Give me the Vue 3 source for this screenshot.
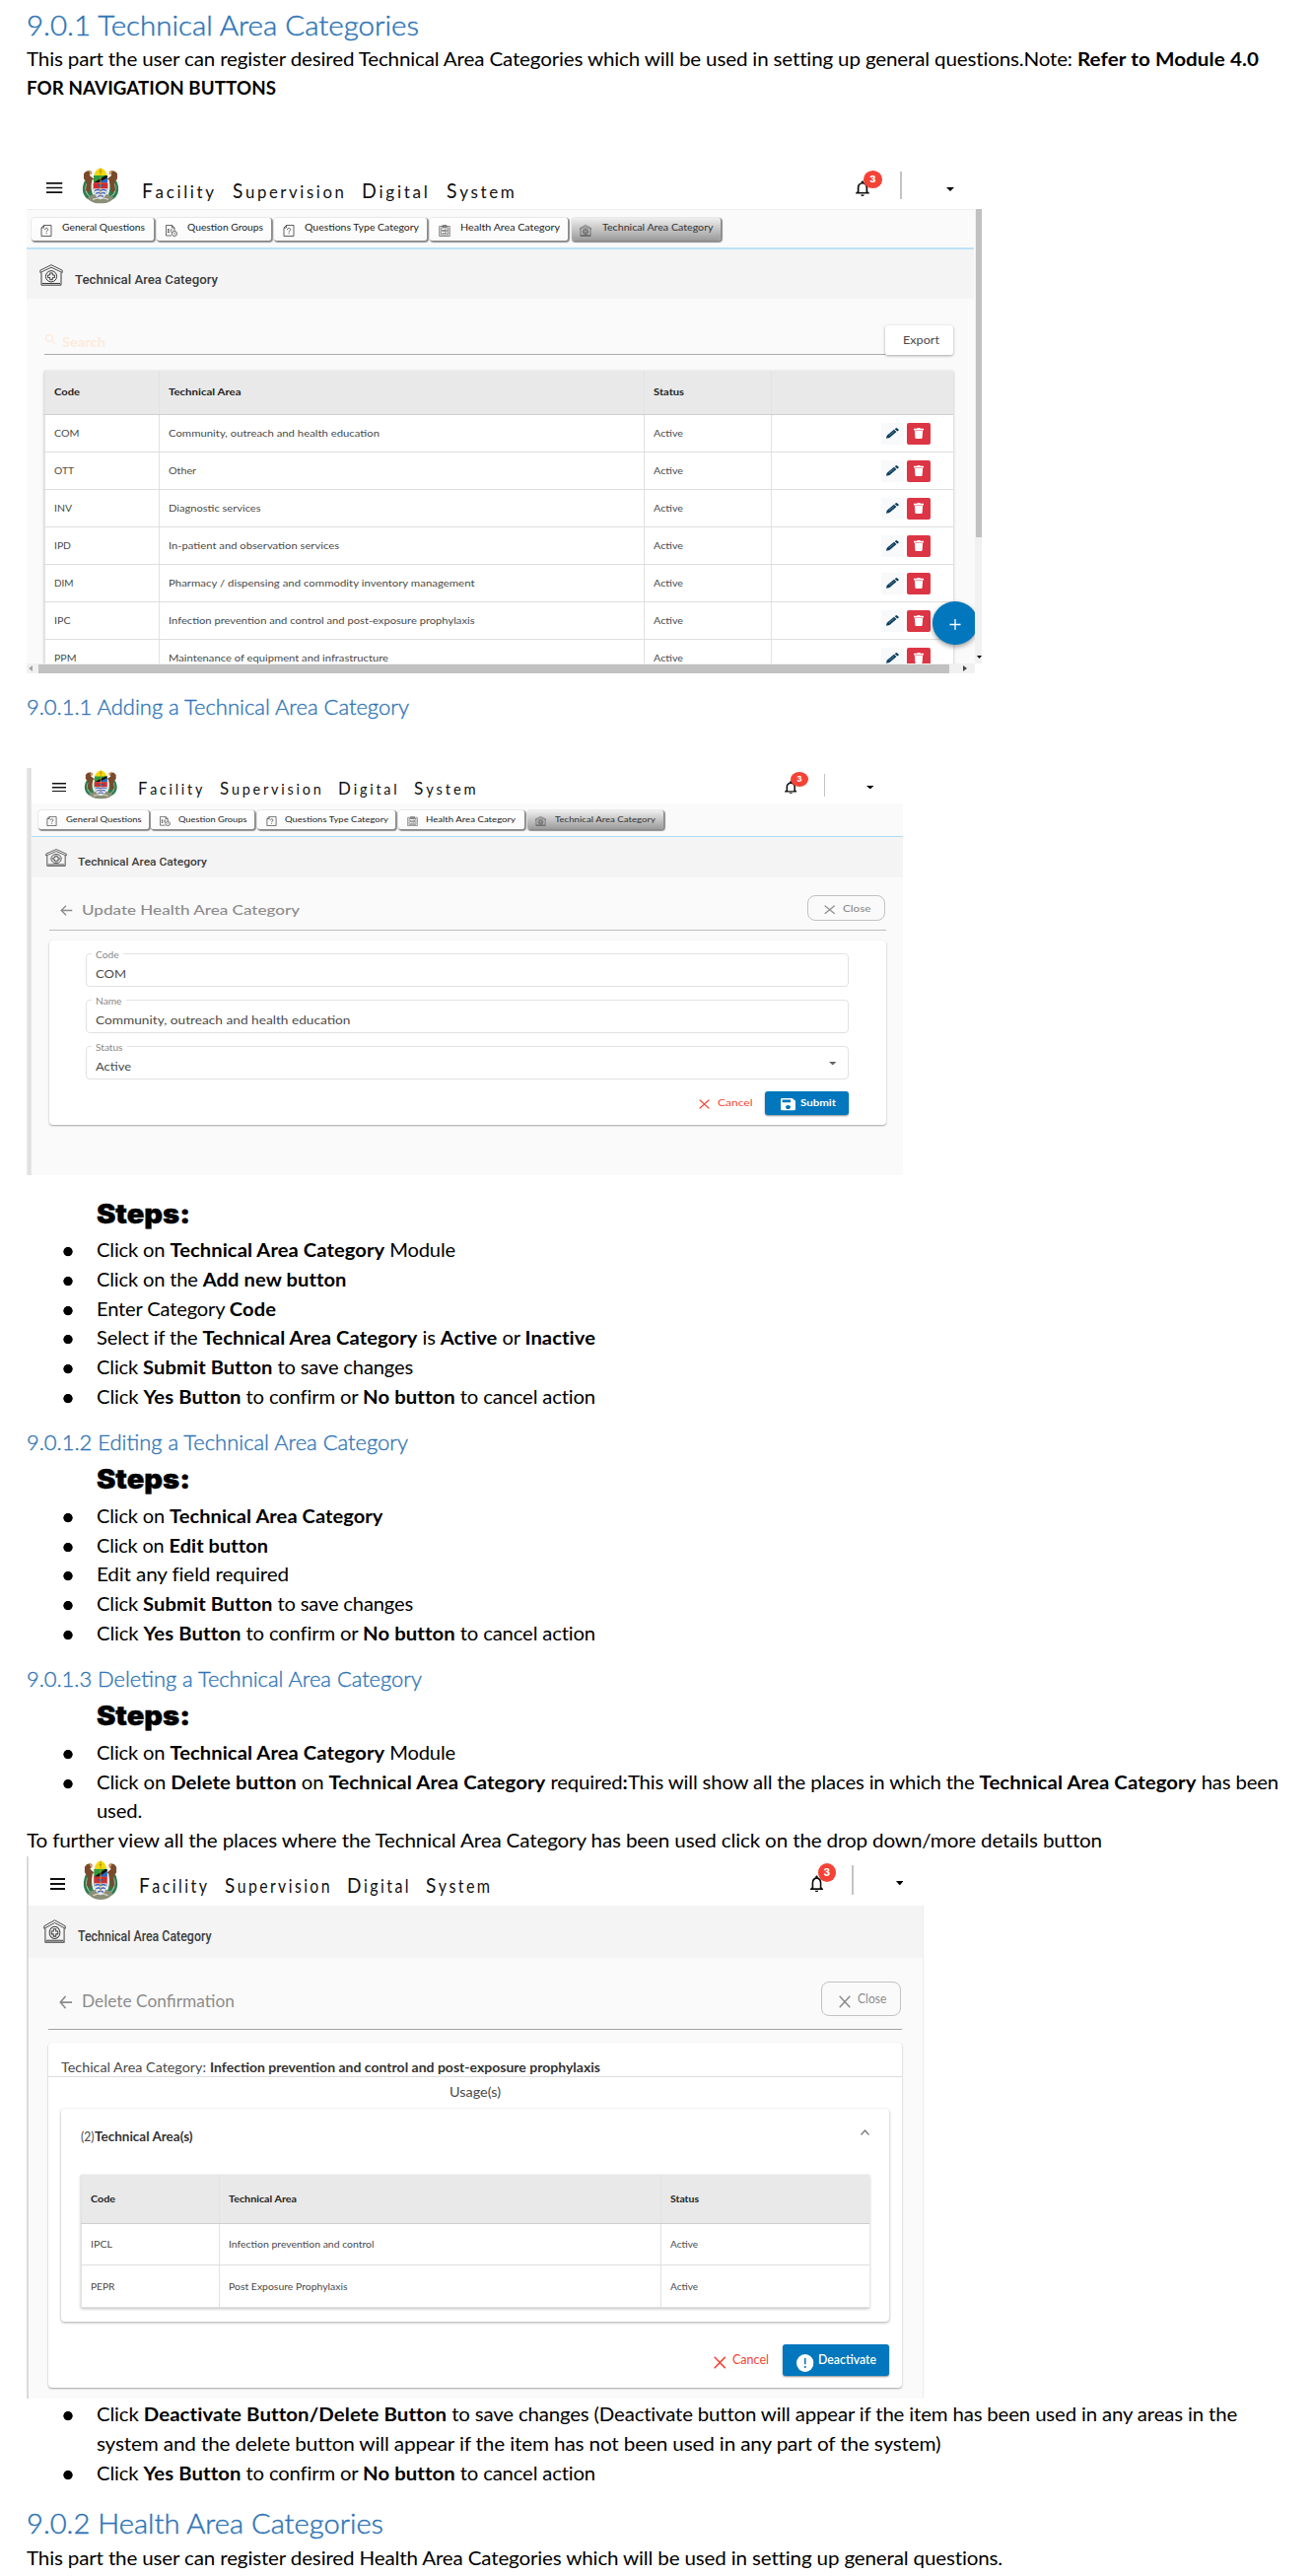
<script setup>
// Stretches a run of text horizontally so that it occupies the given width.
const vFit = {
  mounted(el, { value }) {
    const natural = el.getBoundingClientRect().width
    el.style.transform = `scaleX(${value / natural})`
    el.style.marginRight = `${value - natural}px`
  },
}

const wideTabs = [
  { label: 'General Questions', icon: 'i-doc', w: 123.5, t: 84 },
  { label: 'Question Groups', icon: 'i-group', w: 115.5, t: 77 },
  { label: 'Questions Type Category', icon: 'i-doc', w: 154.5, t: 116 },
  { label: 'Health Area Category', icon: 'i-clip', w: 140, t: 101 },
  { label: 'Technical Area Category', icon: 'i-house', w: 151.5, t: 112.5, on: true },
]
const slimTabs = [
  { label: 'General Questions', icon: 'i-doc', w: 112, t: 76.5 },
  { label: 'Question Groups', icon: 'i-group', w: 105, t: 69.5 },
  { label: 'Questions Type Category', icon: 'i-doc', w: 140, t: 105 },
  { label: 'Health Area Category', icon: 'i-clip', w: 127.5, t: 91 },
  { label: 'Technical Area Category', icon: 'i-house', w: 138, t: 102, on: true },
]
const areas = [
  { code: 'COM', cw: 25.5, name: 'Community, outreach and health education', nw: 214 },
  { code: 'OTT', cw: 20, name: 'Other', nw: 28 },
  { code: 'INV', cw: 18, name: 'Diagnostic services', nw: 93.5 },
  { code: 'IPD', cw: 17, name: 'In-patient and observation services', nw: 173 },
  { code: 'DIM', cw: 19.5, name: 'Pharmacy / dispensing and commodity inventory management', nw: 310.5 },
  { code: 'IPC', cw: 16.5, name: 'Infection prevention and control and post-exposure prophylaxis', nw: 310.5 },
  { code: 'PPM', cw: 22.5, name: 'Maintenance of equipment and infrastructure', nw: 223 },
]
const usages = [
  { code: 'IPCL', cw: 22, name: 'Infection prevention and control', nw: 147.5 },
  { code: 'PEPR', cw: 24.5, name: 'Post Exposure Prophylaxis', nw: 120.5 },
]
const fields = [
  { label: 'Code', lw: 23.5, value: 'COM', vw: 31 },
  { label: 'Name', lw: 26.5, value: 'Community, outreach and health education', vw: 258.5 },
  { label: 'Status', lw: 27.5, value: 'Active', vw: 36, menu: true },
]
</script>

<template>
  <svg class="defs" width="0" height="0" aria-hidden="true">
    <symbol id="emblem" viewBox="0 0 38 36" preserveAspectRatio="none">
      <path d="M3 13C-.5 20 0 28 7 32l7 0-2-18zM35 13c3.500 7 3 15-4 19l-7 0 2-18z" fill="#2f7d4f" />
      <path d="M5 16c-2 5-1 10 3 13M33 16c2 5 1 10-3 13" fill="none" stroke="#cfe3d4" stroke-width=".9" />
      <path d="M2 6q3-4 5.500-2.500Q9 6 8 8l5 4v5l-4 1-1 8-4-3 1-8-3-4z" fill="#7a4a2c" />
      <path d="M36 6q-3-4-5.500-2.500Q29 6 30 8l-5 4v5l4 1 1 8 4-3-1-8 3-4z" fill="#7a4a2c" />
      <path d="M7 3l2.500 1.500L9 7M31 3l-2.500 1.500L29 7" stroke="#c98a4b" stroke-width="1.500" fill="none" />
      <path d="M11.500 12c-2 7-1 13 2.500 18M26.500 12c2 7 1 13-2.500 18" stroke="#f1f1ec" stroke-width="2" fill="none" />
      <path d="M6 30c5-5 21-5 26 0-3 8-23 8-26 0z" fill="#8b8f78" />
      <path d="M11 32q8-3 16 0" stroke="#d7d9c4" stroke-width="1.200" fill="none" />
      <path d="M12 6l7-6 7 6v15c0 6-3 9-7 11-4-2-7-5-7-11z" fill="#e9e6ee" />
      <path d="M12.500 9q.500-7.500 6.500-8.500Q25 1.500 25.500 9z" fill="#f2d90f" />
      <path d="M19 1v6M17.500 4h3" stroke="#b8860b" stroke-width=".8" />
      <path d="M12 8h14v7H12z" fill="#2e9a3d" />
      <path d="M16 15l10-7v7z" fill="#2768c8" />
      <path d="M12 15l12-7h2v2l-9 5z" fill="#111" />
      <path d="M12 15h14v6H12z" fill="#d42a2e" />
      <path d="M16 17h6l-3 4z" fill="#2a57a8" />
      <path d="M13 23l3-1 3 1 3-1 3 1M14 26l3-1 2 1 3-1 2 1M16 29l3-1 3 1" stroke="#3c66c4" stroke-width="1.300" fill="none" />
      <path d="M19 9v20" stroke="#c9a427" stroke-width=".8" />
    </symbol>
    <symbol id="i-burger" viewBox="0 0 18 12" preserveAspectRatio="none">
      <path d="M0 1h18M0 6h18M0 11h18" stroke="#111" stroke-width="1.900" />
    </symbol>
    <symbol id="i-bell" viewBox="4 2 16 20" preserveAspectRatio="none">
      <path d="M12 22c1.100 0 2-.9 2-2h-4c0 1.100.9 2 2 2zm6-6v-5c0-3.070-1.630-5.640-4.500-6.320V4c0-.83-.67-1.500-1.500-1.500s-1.500.67-1.500 1.500v.68C7.640 5.360 6 7.920 6 11v5l-2 2v1h16v-1l-2-2zm-2 1H8v-6c0-2.480 1.510-4.500 4-4.500s4 2.020 4 4.500v6z" fill="#111" />
    </symbol>
    <symbol id="i-caret" viewBox="0 0 10 5" preserveAspectRatio="none"><path d="M0 0h10L5 5z" fill="currentColor" /></symbol>
    <symbol id="i-house" viewBox="0 0 24 22" preserveAspectRatio="none">
      <g fill="none" stroke="currentColor">
        <path d="M.8 8.500V6.200L12 .7l11.200 5.500v2.300L12 3.200z" stroke-width=".9" />
        <path d="M2 8.500v12.700h20V8.500M3 19.500h18" stroke-width="1" />
        <circle cx="12" cy="12.300" r="5.600" stroke-width="1" />
        <path d="M10.700 8.900h2.600v2.100h2.100v2.600h-2.100v2.100h-2.600v-2.100H8.600V11h2.100z" stroke-width="1" />
      </g>
    </symbol>
    <symbol id="i-doc" viewBox="0 0 12 12" preserveAspectRatio="none">
      <path d="M1 3v8.500h10V.5H3.500zM3.500.5V3H1M4.500 5c0-2.200 3.200-2.200 3.200-.2 0 1.200-1.600 1-1.600 2.500M6.100 8.200v1.100" fill="none" stroke="#444" stroke-width=".85" />
    </symbol>
    <symbol id="i-group" viewBox="0 0 12 12" preserveAspectRatio="none">
      <path d="M6 11H.5V.5h6L9 3v3M6.500.5V3H9M4.500 5h2.500M4.500 7h2" fill="none" stroke="#444" stroke-width=".8" />
      <path d="M2 4.300h1.500v1.500H2zM2 6.500h1.500V8H2z" fill="#333" />
      <circle cx="9" cy="9" r="2.500" fill="none" stroke="#444" stroke-width=".8" /><path d="M9 8v1.200h1" stroke="#444" stroke-width=".6" fill="none" />
    </symbol>
    <symbol id="i-clip" viewBox="0 0 12 12" preserveAspectRatio="none">
      <path d="M.7 1.500h10.600v10H.7zM2.300 3h7.400v7H2.300zM4 .5h4v1.800H4zM3.800 7V5l1.500 2V5M6.500 5h1.700v2H6.500zM3.500 8.600h5" fill="none" stroke="#555" stroke-width=".7" />
    </symbol>
    <symbol id="i-search" viewBox="3 3 17.500 17.500">
      <path d="M15.500 14h-.79l-.28-.27A6.470 6.470 0 0 0 16 9.500 6.500 6.500 0 1 0 9.500 16c1.610 0 3.090-.59 4.230-1.570l.27.28v.79l5 4.990L20.490 19l-4.990-5zm-6 0C7.010 14 5 11.990 5 9.500S7.010 5 9.500 5 14 7.010 14 9.500 11.990 14 9.500 14z" fill="currentColor" />
    </symbol>
    <symbol id="i-pencil" viewBox="0 0 14 12" preserveAspectRatio="none">
      <path d="M0 11.800l.8-3.400L8.500 2l2.800 2.300-7.600 6.500zM9.300 1.300L10.700.2q.5-.3 1 0l2 1.600q.4.500 0 1l-1.500 1.100z" fill="#0b3c5d" />
      <path d="M3 8.600l5.500-4.500" stroke="#8fb3cc" stroke-width=".6" />
    </symbol>
    <symbol id="i-trash" viewBox="0 0 10 11" preserveAspectRatio="none">
      <path d="M0 .8h3.200L3.800 0h2.400l.6.8H10v1.600H0zM.9 3h8.200l-.5 7q-.1 1-1 1H2.400q-.9 0-1-1z" fill="#fff" />
    </symbol>
    <symbol id="i-back" viewBox="0 0 14 12" preserveAspectRatio="none">
      <path d="M14 6H1.500M6.800.8L1.300 6l5.500 5.200" fill="none" stroke="#8c8c8c" stroke-width="1.500" />
    </symbol>
    <symbol id="i-x" viewBox="0 0 12 12" preserveAspectRatio="none">
      <path d="M.7.700l10.600 10.600M11.300.7L.7 11.300" stroke="currentColor" stroke-width="1.500" />
    </symbol>
    <symbol id="i-save" viewBox="3 3 18 18" preserveAspectRatio="none">
      <path d="M17 3H5a2 2 0 0 0-2 2v14c0 1.100.9 2 2 2h14c1.100 0 2-.9 2-2V7l-4-4zm-5 16c-1.660 0-3-1.340-3-3s1.340-3 3-3 3 1.340 3 3-1.340 3-3 3zm3-10H5V5h10v4z" fill="#fff" />
    </symbol>
    <symbol id="i-alert" viewBox="0 0 18 18" preserveAspectRatio="none">
      <circle cx="9" cy="9" r="9" fill="#fff" /><path d="M9 4v6.200M9 12v2" stroke="#0277bd" stroke-width="1.600" />
    </symbol>
    <symbol id="i-up" viewBox="0 0 10 6" preserveAspectRatio="none"><path d="M.6 5.400L5 1l4.400 4.400" fill="none" stroke="#777" stroke-width="1.400" /></symbol>
  </svg>

  <article class="doc">
    <h3><span v-fit="398">9.0.1 Technical Area Categories</span></h3>
    <div class="text intro">
      <p v-fit="1250">This part the user can register desired Technical Area Categories which will be used in setting up general questions.Note: <b>Refer to Module 4.0</b></p>
      <p v-fit="253"><b>FOR NAVIGATION BUTTONS</b></p>
    </div>

    <!-- Technical area list -->
    <section class="shot list">
      <header class="bar">
        <svg class="burger"><use href="#i-burger" /></svg>
        <svg class="logo"><use href="#emblem" /></svg>
        <div class="brand">
          <span v-fit="75.7"><i>F</i>acility</span><span v-fit="115.5"><i>S</i>upervision</span><span v-fit="69.5"><i>D</i>igital</span><span v-fit="71.5"><i>S</i>ystem</span>
        </div>
        <div class="bell"><svg><use href="#i-bell" /></svg><b class="badge">3</b></div>
        <hr class="sep" />
        <svg class="caret"><use href="#i-caret" /></svg>
      </header>
      <div class="pane">
        <nav class="tabs">
          <div v-for="t in wideTabs" :key="t.label" class="tab" :class="{ on: t.on }" :style="{ width: t.w + 'px' }">
            <svg><use :href="'#' + t.icon" /></svg><span v-fit="t.t">{{ t.label }}</span>
          </div>
        </nav>
        <div class="band"><svg><use href="#i-house" /></svg><span v-fit="145">Technical Area Category</span></div>
        <div class="search">
          <div class="query"><svg><use href="#i-search" /></svg><span v-fit="44">Search</span></div>
          <div class="export"><span v-fit="37">Export</span></div>
        </div>
        <div class="table">
          <div class="row head"><div><span v-fit="26">Code</span></div><div><span v-fit="73.5">Technical Area</span></div><div><span v-fit="31">Status</span></div><div></div></div>
          <div v-for="a in areas" :key="a.code" class="row">
            <div><span v-fit="a.cw">{{ a.code }}</span></div>
            <div><span v-fit="a.nw">{{ a.name }}</span></div>
            <div><span v-fit="30">Active</span></div>
            <div class="acts"><em class="edit"><svg><use href="#i-pencil" /></svg></em><em class="del"><svg><use href="#i-trash" /></svg></em></div>
          </div>
        </div>
        <div class="fab"><svg viewBox="0 0 14 14"><path d="M7 0v14M0 7h14" stroke="#fff" stroke-width="1.700" /></svg></div>
      </div>
      <div class="vbar"><div></div><svg class="caret"><use href="#i-caret" /></svg></div>
      <div class="hbar"><svg viewBox="0 0 4 6"><path d="M4 0v6L0 3z" fill="#a3a3a3" /></svg><div></div><svg viewBox="0 0 4 6"><path d="M0 0v6l4-3z" fill="#444" /></svg></div>
    </section>

    <h4 class="first"><span v-fit="388">9.0.1.1 Adding a Technical Area Category</span></h4>

    <!-- Update form -->
    <section class="shot form">
      <header class="bar">
        <svg class="burger"><use href="#i-burger" /></svg>
        <svg class="logo"><use href="#emblem" /></svg>
        <div class="brand">
          <span v-fit="68"><i>F</i>acility</span><span v-fit="105.5"><i>S</i>upervision</span><span v-fit="62.5"><i>D</i>igital</span><span v-fit="65.5"><i>S</i>ystem</span>
        </div>
        <div class="bell"><svg><use href="#i-bell" /></svg><b class="badge">3</b></div>
        <hr class="sep" />
        <svg class="caret"><use href="#i-caret" /></svg>
      </header>
      <nav class="tabs">
        <div v-for="t in slimTabs" :key="t.label" class="tab" :class="{ on: t.on }" :style="{ width: t.w + 'px' }">
          <svg><use :href="'#' + t.icon" /></svg><span v-fit="t.t">{{ t.label }}</span>
        </div>
      </nav>
      <div class="band"><svg><use href="#i-house" /></svg><span v-fit="131">Technical Area Category</span></div>
      <div class="title">
        <svg><use href="#i-back" /></svg><span v-fit="221">Update Health Area Category</span>
        <div class="close"><svg><use href="#i-x" /></svg><span v-fit="28.5">Close</span></div>
      </div>
      <div class="card">
        <div v-for="f in fields" :key="f.label" class="field">
          <label><span v-fit="f.lw">{{ f.label }}</span></label>
          <div class="value"><span v-fit="f.vw">{{ f.value }}</span><svg v-if="f.menu" class="caret"><use href="#i-caret" /></svg></div>
        </div>
        <div class="foot">
          <div class="cancel"><svg><use href="#i-x" /></svg><span v-fit="35.5">Cancel</span></div>
          <div class="primary"><svg><use href="#i-save" /></svg><span v-fit="36">Submit</span></div>
        </div>
      </div>
    </section>

    <h2 class="first"><span v-fit="95">Steps:</span></h2>
    <ul class="text">
      <li><p v-fit="364">Click on <b>Technical Area Category</b> Module</p></li>
      <li><p v-fit="253.500">Click on the <b>Add new button</b></p></li>
      <li><p v-fit="182">Enter Category <b>Code</b></p></li>
      <li><p v-fit="506">Select if the <b>Technical Area Category</b> is <b>Active</b> or <b>Inactive</b></p></li>
      <li><p v-fit="321">Click <b>Submit Button</b> to save changes</p></li>
      <li><p v-fit="506">Click <b>Yes Button</b> to confirm or <b>No button</b> to cancel action</p></li>
    </ul>

    <h4><span v-fit="387">9.0.1.2 Editing a Technical Area Category</span></h4>
    <h2><span v-fit="95">Steps:</span></h2>
    <ul class="text">
      <li><p v-fit="290.500">Click on <b>Technical Area Category</b></p></li>
      <li><p v-fit="174">Click on <b>Edit button</b></p></li>
      <li><p v-fit="195">Edit any field required</p></li>
      <li><p v-fit="321">Click <b>Submit Button</b> to save changes</p></li>
      <li><p v-fit="506">Click <b>Yes Button</b> to confirm or <b>No button</b> to cancel action</p></li>
    </ul>

    <h4><span v-fit="401">9.0.1.3 Deleting a Technical Area Category</span></h4>
    <h2><span v-fit="95">Steps:</span></h2>
    <ul class="text">
      <li><p v-fit="364">Click on <b>Technical Area Category</b> Module</p></li>
      <li>
        <p v-fit="1199">Click on <b>Delete button</b> on <b>Technical Area Category</b> required<b>:</b>This will show all the places in which the <b>Technical Area Category</b> has been</p>
        <p v-fit="46">used.</p>
      </li>
    </ul>
    <div class="text"><p v-fit="1091">To further view all the places where the Technical Area Category has been used click on the drop down/more details button</p></div>

    <!-- Delete confirmation -->
    <section class="shot confirm">
      <header class="bar">
        <svg class="burger"><use href="#i-burger" /></svg>
        <svg class="logo"><use href="#emblem" /></svg>
        <div class="brand">
          <span v-fit="71.5"><i>F</i>acility</span><span v-fit="109"><i>S</i>upervision</span><span v-fit="65"><i>D</i>igital</span><span v-fit="67.5"><i>S</i>ystem</span>
        </div>
        <div class="bell"><svg><use href="#i-bell" /></svg><b class="badge">3</b></div>
        <hr class="sep" />
        <svg class="caret"><use href="#i-caret" /></svg>
      </header>
      <div class="band"><svg><use href="#i-house" /></svg><span v-fit="135.5">Technical Area Category</span></div>
      <div class="title">
        <svg><use href="#i-back" /></svg><span v-fit="155">Delete Confirmation</span>
        <div class="close"><svg><use href="#i-x" /></svg><span v-fit="29.5">Close</span></div>
      </div>
      <div class="card">
        <div class="subject"><span v-fit="147">Techical Area Category:</span><b v-fit="396">Infection prevention and control and post-exposure prophylaxis</b></div>
        <div class="usage"><span v-fit="52">Usage(s)</span></div>
        <div class="panel">
          <div class="phead"><span v-fit="13.500">(2)</span><b v-fit="99.500">Technical Area(s)</b><svg><use href="#i-up" /></svg></div>
          <div class="table">
            <div class="row head"><div><span v-fit="25">Code</span></div><div><span v-fit="69">Technical Area</span></div><div><span v-fit="29">Status</span></div></div>
            <div v-for="u in usages" :key="u.code" class="row">
              <div><span v-fit="u.cw">{{ u.code }}</span></div>
              <div><span v-fit="u.nw">{{ u.name }}</span></div>
              <div><span v-fit="28">Active</span></div>
            </div>
          </div>
        </div>
        <div class="foot">
          <div class="cancel"><svg><use href="#i-x" /></svg><span v-fit="37">Cancel</span></div>
          <div class="primary"><svg><use href="#i-alert" /></svg><span v-fit="59">Deactivate</span></div>
        </div>
      </div>
    </section>

    <ul class="text last">
      <li>
        <p v-fit="1157">Click <b>Deactivate Button/Delete Button</b> to save changes (Deactivate button will appear if the item has been used in any areas in the</p>
        <p v-fit="856.500">system and the delete button will appear if the item has not been used in any part of the system)</p>
      </li>
      <li><p v-fit="506">Click <b>Yes Button</b> to confirm or <b>No button</b> to cancel action</p></li>
    </ul>
    <h3 class="second"><span v-fit="362">9.0.2 Health Area Categories</span></h3>
    <div class="text"><p v-fit="990">This part the user can register desired Health Area Categories which will be used in setting up general questions.</p></div>
  </article>
</template>

<style>
body { margin: 0; background: #fff; }
</style>

<style scoped>
.defs { display: block; }
.doc {
  width: 1332px; height: 2613px; box-sizing: border-box; padding-left: 27px; overflow: hidden;
  font-family: Lato, "Liberation Sans", sans-serif; color: #000;
}
h2, h3, h4, p, ul { margin: 0; padding: 0; }
.doc span, .doc p, .subject b, .phead b {
  display: block; width: max-content; white-space: nowrap; transform-origin: 0 50%; flex: none;
}
.text { font-size: 18.5px; line-height: 29.8px; letter-spacing: -.15px; translate: 0 .9px; }
.text b { letter-spacing: .08px; }
h3 { height: 37.7px; padding-top: 7px; font-weight: 300; font-size: 26.5px; line-height: 38.7px; color: #2e74b5; -webkit-text-stroke: .4px #2e74b5; }
h3.second { height: 37.7px; padding-top: 17px; margin-bottom: 1px; }
h4 { height: 28px; padding-top: 17px; font-weight: 300; font-size: 21.5px; line-height: 28px; margin-top: 0; color: #2e74b5; -webkit-text-stroke: .35px #2e74b5; }
h4.first { padding-top: 19.500px; margin-bottom: 47.500px; }
h2 { height: 40.5px; padding-top: 5.5px; margin-left: 71px; font-family: Inter, "Liberation Sans", sans-serif; font-weight: 900; font-size: 26.8px; line-height: 37px; -webkit-text-stroke: .4px #000; }
h2.first { padding-top: 21px; height: 40px; }
.intro { height: 115.3px; }
ul { list-style: none; }
li { padding-left: 71px; background: radial-gradient(circle 4.800px at 42px 15.700px, #000 4.300px, transparent 5px) no-repeat; }
ul.last { padding-top: 1.700px; }

.shot { position: relative; overflow: hidden; color: #4a4a4a; }
.bar { display: flex; align-items: flex-start; background: #fff; }
.bar svg, .bar div, .bar hr { flex: none; }
.brand { display: flex; color: #111; letter-spacing: 2.800px; line-height: 24px; }
.brand i { font-style: normal; }
.bell { position: relative; }
.bell svg { display: block; width: 100%; height: 100%; }
.badge { position: absolute; border-radius: 50%; background: #f44336; color: #fff; text-align: center; font-family: Inter, sans-serif; font-weight: 800; }
.sep { border: 0; margin: 0; width: 2px; background: #c4c4c4; }
.caret { color: #000; }
.tabs { display: flex; background: #fafafa; box-sizing: border-box; }
.tab {
  display: flex; box-sizing: border-box; flex: none; border-radius: 3px; background: linear-gradient(#fff, #fafafa);
  box-shadow: 1px 1px 1px 1px #8c8c8c, 0 0 1px #bbb; color: #222;
}
.tab svg { flex: none; }
.tab.on { background: linear-gradient(#efefef, #9b9b9b); color: #333; }
.band { display: flex; box-sizing: border-box; background: #f4f4f4; font-family: Roboto, sans-serif; font-weight: 500; color: #3c3c3c; }
.row { display: grid; box-sizing: border-box; border-bottom: 1px solid #dedede; background: #fff; }
.row > div { border-left: 1px solid #e0e2e4; display: flex; align-items: center; padding-left: 9px; }
.row.head { background: #e9e9e9; font-weight: 700; color: #222; border-bottom-color: #cfcfcf; }
.table { box-shadow: 0 1px 3px rgba(0, 0, 0, .25); }
.title { display: flex; box-sizing: border-box; color: #8c8c8c; }
.close { display: flex; box-sizing: border-box; margin-left: auto; border: 1.500px solid #c2c2c2; border-radius: 8px; color: #8c8c8c; }
.card { box-sizing: border-box; background: #fff; border-radius: 4px; box-shadow: 0 1px 2px rgba(0, 0, 0, .35); }
.foot { display: flex; justify-content: flex-end; }
.cancel { display: flex; color: #f44336; }
.primary { display: flex; box-sizing: border-box; border-radius: 3px; background: #0277bd; color: #fff; font-weight: 700; box-shadow: 0 1px 2px rgba(0, 0, 0, .45); }

.list { width: 969px; height: 524px; display: grid; grid-template: 52px 461px 10px / 961.500px 7.500px; }
.list .bar { grid-column: 1 / 3; }
.list .burger { width: 16.500px; height: 11px; margin: 25.500px 0 0 20px; }
.list .logo { width: 38px; height: 36.500px; margin: 10.500px 0 0 19.500px; }
.list .brand { margin: 21px 0 0 23px; gap: 16px; font-size: 18px; }
.list .brand i { font-size: 20.500px; }
.list .bell { width: 14px; height: 16px; margin: 23.500px 0 0 auto; }
.list .badge { left: 7.500px; top: -10.500px; width: 19.500px; height: 18px; font-size: 9.500px; line-height: 18px; }
.list .sep { height: 28px; margin: 14.500px 0 0 31px; width: 1.500px; }
.list .caret { width: 8px; height: 4px; margin: 29.700px 28px 0 45.500px; }
.list .pane { position: relative; overflow: hidden; background: #fafafa; }
.list .tabs { height: 41px; padding: 8.500px 0 0 5px; gap: 3.600px; border-top: 1px solid #eee; border-bottom: 2px solid #bfe2f9; width: 961px; }
.list .tab { height: 23px; padding-left: 8.500px; font-size: 9.500px; line-height: 20px; }
.list .tab svg { width: 12px; height: 12px; margin: 6.500px 10.500px 0 0; }
.list .band { height: 50px; padding: 15px 0 0 12.500px; width: 961px; font-size: 12.300px; line-height: 33px; }
.list .band svg { width: 24px; height: 22px; margin-right: 12.500px; }
.list .search { display: flex; padding: 27px 0 0 18px; height: 30px; width: 922px; }
.list .query { display: flex; width: 853px; box-sizing: border-box; border-bottom: 1.500px solid #aaa; color: #fdebdc; font-size: 14px; line-height: 34px; font-weight: 700; }
.list .query svg { width: 11px; height: 11px; margin: 9.500px 6px 0 1px; }
.list .export { width: 69px; height: 30px; background: #fff; border-radius: 3px; box-sizing: border-box; padding-left: 17.500px; font-size: 12px; line-height: 29.500px; box-shadow: 0 1px 3px rgba(0, 0, 0, .35); }
.list .table { width: 922px; margin: 16px 0 0 18px; font-size: 9.600px; }
.list .row { height: 38.050px; grid-template-columns: 116px 492px 129px 185px; }
.list .row.head { height: 45px; }
.list .row .acts { padding: 0 23px 0 0; justify-content: flex-end; gap: 3px; }
.edit, .del { display: flex; align-items: center; justify-content: center; }
.edit { width: 23px; height: 22px; background: #f8f9fa; }
.edit svg { width: 13px; height: 11px; margin-top: -1px; }
.del { width: 24.500px; height: 22px; background: #dc3545; border-radius: 2px; }
.del svg { width: 10px; height: 11px; }
.fab { position: absolute; left: 919px; top: 398px; width: 46px; height: 44px; border-radius: 50%; background: #0277bd; box-shadow: 0 2px 5px rgba(0, 0, 0, .4); display: flex; align-items: center; justify-content: center; }
.fab svg { width: 14px; height: 11px; margin-top: 4px; }
.vbar { background: #f1f1f1; display: flex; flex-direction: column; justify-content: space-between; }
.vbar div { height: 333px; margin-left: 1.500px; background: #c1c1c1; }
.list .vbar .caret { width: 5px; height: 3px; margin: 0 0 5px 2.500px; }
.hbar { display: flex; align-items: center; background: #f1f1f1; height: 10px; padding: 0 8px 0 2px; grid-column: 1; }
.hbar div { flex: 1; height: 8.500px; margin: 1.500px 14px 0 6px; background: #c1c1c1; }
.hbar svg { width: 4px; height: 6px; }

.form { width: 889px; height: 413px; background: #fafafa; border-left: 0; box-sizing: border-box; padding-left: 5px; }
.form::before { content: ""; position: absolute; left: 0; top: 0; width: 5px; height: 100%; background: linear-gradient(90deg, #eaeaea, #dcdcdc 80%, #f4f4f4); }
.form .bar { height: 36px; }
.form .burger { width: 14.500px; height: 9.500px; margin: 15px 0 0 20.500px; }
.form .logo { width: 34.500px; height: 29.500px; margin: 2.500px 0 0 18px; }
.form .brand { margin: 9.200px 0 0 20.500px; gap: 14.500px; font-size: 14.500px; }
.form .brand i { font-size: 17px; }
.form .bell { width: 12.500px; height: 13.500px; margin: 13px 0 0 auto; }
.form .badge { left: 6.500px; top: -9px; width: 18px; height: 15px; font-size: 8px; line-height: 15px; }
.form .sep { height: 23px; margin: 6px 0 0 27.500px; width: 1.500px; }
.form .caret { width: 7.500px; height: 3.500px; margin: 18px 29.500px 0 42px; }
.form .tabs { height: 34.500px; padding: 7px 0 0 6.500px; gap: 2.900px; border-bottom: 1.500px solid #aedcf8; }
.form .tab { height: 19.500px; padding-left: 8.500px; font-size: 8px; line-height: 18px; }
.form .tab svg { width: 11px; height: 10px; margin: 6px 8.500px 0 0; }
.form .band { height: 40.500px; padding: 11.500px 0 0 13.500px; font-size: 10.500px; line-height: 27px; }
.form .band svg { width: 22px; height: 18px; margin-right: 11.500px; }
.form .title { height: 54.500px; width: 849px; margin-left: 18px; padding-top: 18px; border-bottom: 1.500px solid #bdbdbd; font-size: 13.500px; line-height: 30px; font-weight: 500; }
.form .title > svg { width: 12.500px; height: 11px; margin: 10.500px 9.500px 0 11px; }
.form .close { width: 79px; height: 26.500px; margin-right: 1px; padding-left: 16px; font-size: 10px; line-height: 25.500px; }
.form .close svg { width: 11.500px; height: 9.500px; margin: 9.500px 7px 0 0; }
.form .card { width: 849px; height: 187px; margin: 9.500px 0 0 18px; padding: 13.500px 38px 0 37px; }
.field { height: 33.500px; box-sizing: border-box; border: 1px solid #e2e2e2; border-radius: 4px; margin-bottom: 13.500px; font-size: 11.500px; }
.field label { display: block; width: max-content; background: #fff; margin: -5.500px 0 0 5px; padding: 0 4px; font-size: 8.500px; line-height: 12px; color: #888; }
.field .value { display: flex; justify-content: space-between; padding-left: 9px; line-height: 25px; color: #4a4a4a; }
.form .value .caret { margin: 8.500px 12px 0 0; color: #666; }
.form .foot { padding-top: 0; margin-top: -1.500px; font-size: 9.500px; line-height: 23px; }
.form .cancel svg { width: 11px; height: 10px; margin: 8.500px 8px 0 0; }
.form .primary { width: 85px; height: 24px; margin-left: 12.500px; padding-left: 15.500px; }
.form .primary svg { width: 15px; height: 12.500px; margin: 7.500px 5.500px 0 0; }

.confirm { width: 909.5px; height: 550px; margin-top: .8px; background: #fafafa; box-sizing: border-box; padding-left: 2px; }
.confirm::before { content: ""; position: absolute; left: 0; top: 0; width: 2px; height: 100%; background: #dadada; }
.confirm::after { content: ""; position: absolute; right: 0; top: 50px; width: 1px; bottom: 0; background: #ececec; }
.confirm .bar { height: 50px; }
.confirm .burger { width: 15px; height: 12px; margin: 22px 0 0 22px; }
.confirm .logo { width: 36px; height: 40px; margin: 4px 0 0 18px; }
.confirm .brand { margin: 17.300px 0 0 21px; gap: 15px; font-size: 18.500px; }
.confirm .brand i { font-size: 22px; }
.confirm .bell { width: 13px; height: 17.500px; margin: 19px 0 0 auto; }
.confirm .badge { left: 7.500px; top: -12px; width: 18.500px; height: 19px; font-size: 10px; line-height: 19px; }
.confirm .sep { height: 30px; margin: 9px 0 0 29px; }
.confirm .caret { width: 7.500px; height: 4.500px; margin: 25px 20.500px 0 42.500px; }
.confirm .band { height: 53px; padding: 14px 0 0 15px; font-size: 13.800px; line-height: 35px; }
.confirm .band svg { width: 23px; height: 24px; margin-right: 12px; }
.confirm .title { height: 73.500px; width: 866px; margin-left: 20px; padding-top: 24px; border-bottom: 1.500px solid #a2a2a2; font-size: 17px; line-height: 39px; }
.confirm .title > svg { width: 13.500px; height: 14px; margin: 14.500px 10px 0 10.500px; }
.confirm .close { width: 81.500px; height: 35px; margin-right: 1px; padding-left: 17px; font-size: 12.500px; line-height: 34px; }
.confirm .close svg { width: 12px; height: 13px; margin: 13px 7.500px 0 0; }
.confirm .card { width: 866px; height: 350px; margin: 12.500px 0 0 20px; }
.subject { display: flex; height: 35.500px; box-sizing: border-box; border-bottom: 1px solid #ddd; padding: 15px 0 0 13px; gap: 4px; font-size: 13.500px; line-height: 21px; }
.subject b { color: #333; }
.usage { height: 31.500px; padding-left: 407px; font-size: 13.500px; line-height: 31px; }
.panel { width: 840px; height: 216px; box-sizing: border-box; margin-left: 13px; padding: 0 20px; border-radius: 4px; box-shadow: 0 1px 3px rgba(0, 0, 0, .35); }
.phead { display: flex; height: 67px; font-size: 12.500px; line-height: 58px; }
.phead b { color: #333; margin-left: .5px; }
.phead svg { width: 9px; height: 6px; margin: 21px 0 0 auto; }
.confirm .table { width: 800px; font-size: 9.800px; }
.confirm .row { height: 42.500px; grid-template-columns: 140px 448px 212px; }
.confirm .row.head { height: 50px; }
.confirm .foot { padding: 23px 13px 0 0; font-size: 12.500px; line-height: 31px; }
.confirm .cancel svg { width: 12.500px; height: 13px; margin: 12px 7px 0 0; }
.confirm .primary { width: 108px; height: 32px; margin-left: 14px; padding-left: 14px; font-weight: 600; }
.confirm .primary svg { width: 17.500px; height: 18px; margin: 10px 4px 0 0; }
</style>
